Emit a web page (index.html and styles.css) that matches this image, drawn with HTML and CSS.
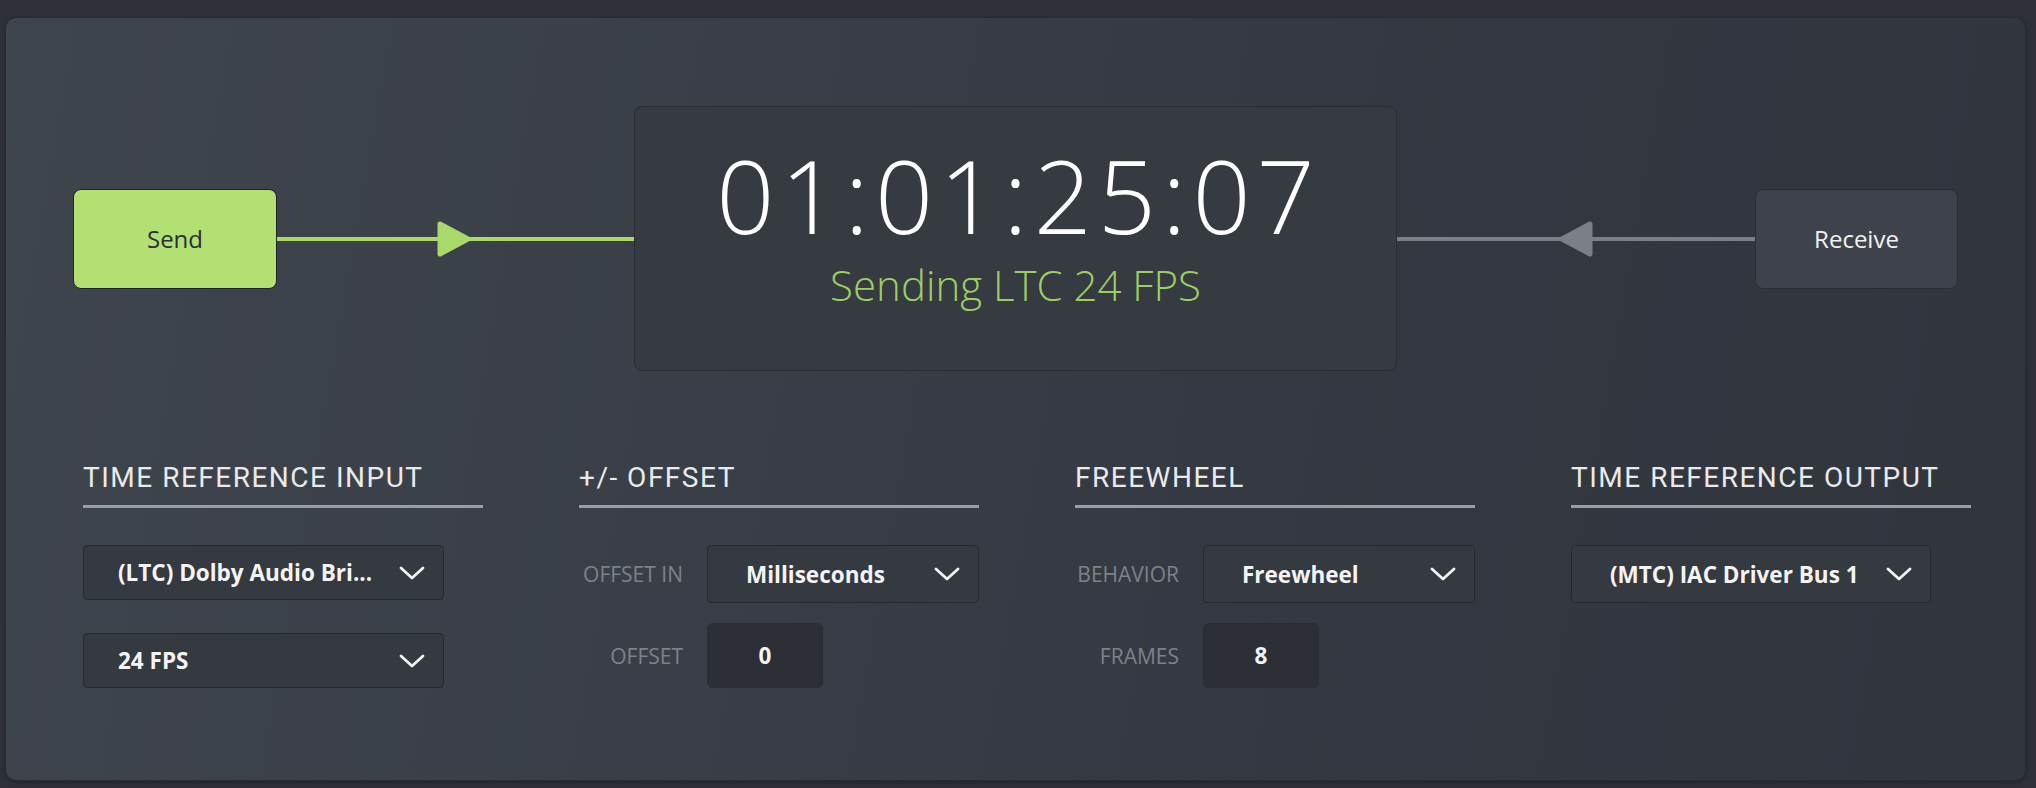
FILE: index.html
```html
<!DOCTYPE html>
<html lang="en">
<head>
<meta charset="utf-8">
<title>Timecode</title>
<link rel="stylesheet" href="styles.css">
</head>
<body>
<div class="panel">
  <div class="flow">
    <div class="node node-send">Send</div>
    <div class="link">
      <svg width="357" height="40" viewBox="0 0 357 40">
        <rect x="0" y="18" width="357" height="4" fill="#a9d96a"/>
        <polygon points="163,5 191,20 163,35" fill="#a9d96a" stroke="#a9d96a" stroke-width="5" stroke-linejoin="round"/>
      </svg>
    </div>
    <div class="clock">
      <div class="tc">01:01:25:07</div>
      <div class="status">Sending LTC 24 FPS</div>
    </div>
    <div class="link">
      <svg width="358" height="40" viewBox="0 0 358 40">
        <rect x="0" y="18" width="358" height="4" fill="#7b8087"/>
        <polygon points="193,5 165,20 193,35" fill="#7b8087" stroke="#7b8087" stroke-width="5" stroke-linejoin="round"/>
      </svg>
    </div>
    <div class="node node-recv">Receive</div>
  </div>

  <div class="settings">
    <section class="group">
      <h2 class="group-title">TIME REFERENCE INPUT</h2>
      <div class="select select-input">
        <span class="select-text">(LTC) Dolby Audio Bri...</span>
        <svg class="chev" width="26" height="14" viewBox="0 0 26 14"><path d="M2 2 L13 12 L24 2" fill="none" stroke="#f2f2f2" stroke-width="2.8" stroke-linecap="round" stroke-linejoin="round"/></svg>
      </div>
      <div class="select select-input second">
        <span class="select-text">24 FPS</span>
        <svg class="chev" width="26" height="14" viewBox="0 0 26 14"><path d="M2 2 L13 12 L24 2" fill="none" stroke="#f2f2f2" stroke-width="2.8" stroke-linecap="round" stroke-linejoin="round"/></svg>
      </div>
    </section>

    <section class="group">
      <h2 class="group-title">+/- OFFSET</h2>
      <div class="field">
        <span class="label">OFFSET IN</span>
        <div class="select select-short">
          <span class="select-text">Milliseconds</span>
          <svg class="chev" width="26" height="14" viewBox="0 0 26 14"><path d="M2 2 L13 12 L24 2" fill="none" stroke="#f2f2f2" stroke-width="2.8" stroke-linecap="round" stroke-linejoin="round"/></svg>
        </div>
      </div>
      <div class="field field-second">
        <span class="label">OFFSET</span>
        <div class="num">0</div>
      </div>
    </section>

    <section class="group">
      <h2 class="group-title">FREEWHEEL</h2>
      <div class="field">
        <span class="label">BEHAVIOR</span>
        <div class="select select-short">
          <span class="select-text">Freewheel</span>
          <svg class="chev" width="26" height="14" viewBox="0 0 26 14"><path d="M2 2 L13 12 L24 2" fill="none" stroke="#f2f2f2" stroke-width="2.8" stroke-linecap="round" stroke-linejoin="round"/></svg>
        </div>
      </div>
      <div class="field field-second">
        <span class="label">FRAMES</span>
        <div class="num">8</div>
      </div>
    </section>

    <section class="group">
      <h2 class="group-title">TIME REFERENCE OUTPUT</h2>
      <div class="select select-output">
        <span class="select-text">(MTC) IAC Driver Bus 1</span>
        <svg class="chev" width="26" height="14" viewBox="0 0 26 14"><path d="M2 2 L13 12 L24 2" fill="none" stroke="#f2f2f2" stroke-width="2.8" stroke-linecap="round" stroke-linejoin="round"/></svg>
      </div>
    </section>
  </div>
</div>
</body>
</html>
```

FILE: styles.css
```css
html, body {
  margin: 0;
  padding: 0;
}

body {
  width: 2036px;
  height: 788px;
  overflow: hidden;
  background: #2e3238;
  font-family: "Open Sans", "Noto Sans", sans-serif;
}

.panel {
  margin: 18px 0 0 6px;
  width: 2019px;
  height: 762px;
  box-sizing: border-box;
  border-radius: 10px;
  background: linear-gradient(100deg, #3f454d 0%, #3a3f47 35%, #343840 65%, #31353c 100%);
  box-shadow: 0 0 0 1px #282b31, 0 2px 5px rgba(0, 0, 0, 0.35);
  overflow: hidden;
}

/* ---------- top flow ---------- */
.flow {
  display: flex;
  align-items: center;
  margin-top: 88px;
  padding-left: 67px;
  height: 265px;
}

.node {
  box-sizing: border-box;
  height: 100px;
  border-radius: 8px;
  display: flex;
  align-items: center;
  justify-content: center;
  font-size: 24px;
  font-weight: 400;
}

.node-send {
  width: 204px;
  background: #b2e073;
  border: 1px solid #1f232a;
  color: #2b2f36;
}

.node-recv {
  width: 203px;
  background: #3e434b;
  border: 1px solid #2a2e34;
  color: #f2f2f2;
}

.link {
  display: flex;
  align-items: center;
  height: 40px;
}

.link svg {
  display: block;
}

.clock {
  box-sizing: border-box;
  width: 763px;
  height: 265px;
  border: 1px solid #2a2e34;
  border-radius: 8px;
  background: #363a41;
  padding-top: 28px;
  text-align: center;
}

.tc {
  font-size: 102px;
  line-height: 120px;
  font-weight: 300;
  letter-spacing: 6px;
  padding-left: 6px;
  color: #ffffff;
}

.status {
  margin-top: 3px;
  font-size: 42px;
  line-height: 54px;
  font-weight: 300;
  color: #9ccf62;
}

/* ---------- settings ---------- */
.settings {
  display: flex;
  gap: 96px;
  margin-top: 91px;
  padding-left: 77px;
}

.group {
  width: 400px;
}

.group-title {
  margin: 0 0 37px 0;
  padding-bottom: 11px;
  border-bottom: 3px solid #9a9ea4;
  font-family: Roboto, "Open Sans", sans-serif;
  font-size: 28px;
  line-height: 32px;
  font-weight: 400;
  letter-spacing: 1.5px;
  color: #e9eaec;
}

.select {
  box-sizing: border-box;
  display: flex;
  align-items: center;
  justify-content: space-between;
  padding: 0 18px 0 38px;
  background: #353940;
  border: 1px solid #272b30;
  border-radius: 4px;
  height: 58px;
}

.select-input {
  width: 361px;
  height: 55px;
  padding-left: 34px;
}

.select-input.second {
  margin-top: 33px;
}

.select-short {
  width: 272px;
}

.select-output {
  width: 360px;
}

.select-text {
  font-size: 22.5px;
  font-weight: 700;
  color: #f4f4f4;
  white-space: nowrap;
}

.chev {
  display: block;
  flex: none;
}

.field {
  display: flex;
  align-items: center;
  gap: 24px;
}

.field-second {
  margin-top: 20px;
}

.label {
  width: 104px;
  text-align: right;
  font-size: 21px;
  font-weight: 400;
  color: #7d8289;
  white-space: nowrap;
}

.num {
  box-sizing: border-box;
  width: 116px;
  height: 65px;
  display: flex;
  align-items: center;
  justify-content: center;
  background: #2c3036;
  border: 1px solid #2a2d33;
  border-radius: 6px;
  font-size: 22.5px;
  font-weight: 700;
  color: #f4f4f4;
}
```
